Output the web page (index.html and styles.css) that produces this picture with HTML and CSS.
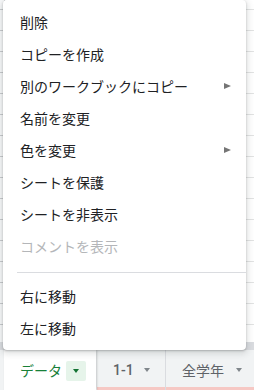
FILE: index.html
```html
<!DOCTYPE html>
<html lang="ja">
<head>
    <meta charset="UTF-8">
    <meta name="viewport" content="width=device-width, initial-scale=1.0">
    <title>Sheet menu</title>
    <link rel="stylesheet" href="styles.css">
</head>
<body>
    <div class="app">
        <div class="grid">
            <div class="rowhead"></div>
            <div class="cells"></div>
        </div>
        <div class="hbar"></div>
        <div class="tabs">
            <div class="tab active">
                <span>データ</span>
                <span class="drop"><i class="caret green"></i></span>
            </div>
            <div class="tab mid">
                <span class="num">1-1</span>
                <i class="caret"></i>
            </div>
            <div class="tab last">
                <span>全学年</span>
                <i class="caret"></i>
            </div>
        </div>
    </div>

    <div class="menu">
        <div class="item">削除</div>
        <div class="item">コピーを作成</div>
        <div class="item">別のワークブックにコピー<i class="arrow"></i></div>
        <div class="item">名前を変更</div>
        <div class="item">色を変更<i class="arrow"></i></div>
        <div class="item">シートを保護</div>
        <div class="item">シートを非表示</div>
        <div class="item disabled">コメントを表示</div>
        <div class="sep"></div>
        <div class="item">右に移動</div>
        <div class="item">左に移動</div>
    </div>
</body>
</html>
```

FILE: styles.css
```css
body {
    margin: 0;
    width: 254px;
    height: 390px;
    overflow: hidden;
    position: relative;
    font-family: Roboto, "Noto Sans CJK JP", sans-serif;
    color: #202124;
    background: #fff;
}
.app {
    display: flex;
    flex-direction: column;
    height: 390px;
}
.grid {
    display: flex;
    height: 342px;
}
.rowhead {
    width: 4px;
    background: repeating-linear-gradient(#f8f9fa 0 9px, #c8cacd 9px 10px, #f8f9fa 10px 21px);
    border-right: 1px solid #c8cacd;
}
.cells {
    flex: 1;
    background: repeating-linear-gradient(#fff 0 9px, #e2e3e3 9px 10px, #fff 10px 21px);
}
.hbar {
    height: 8px;
    background: #dadce0;
}
.tabs {
    display: flex;
    height: 40px;
    background: #f1f3f4;
    padding-left: 4px;
}
.tab {
    display: flex;
    align-items: center;
    flex-shrink: 0;
    box-sizing: border-box;
    padding-left: 16px;
    font-size: 14px;
    white-space: nowrap;
    color: #5f6368;
    box-shadow: inset 0 -3px 0 #f6c8c4;
    border-right: 1px solid #dadce0;
}
.tab.mid {
    width: 69px;
}
.tab.last {
    flex: 1;
    border-right: none;
}
.tab.active {
    width: 92px;
    background: #fff;
    color: #188038;
    box-shadow: 1px 0 2px rgba(60, 64, 67, 0.25);
    border-right: none;
    margin-right: 1px;
    z-index: 1;
}
.num {
    font-weight: 500;
}
.drop {
    display: flex;
    align-items: center;
    justify-content: center;
    width: 20px;
    height: 20px;
    margin-left: 4px;
    margin-top: 2px;
    border-radius: 2px;
    background: #e6f4ea;
}
.caret {
    width: 0;
    height: 0;
    border-left: 3px solid transparent;
    border-right: 3px solid transparent;
    border-top: 4px solid #80868b;
    margin-left: 10px;
}
.tab.last .caret {
    margin-left: 12px;
}
.caret.green {
    border-top-color: #137333;
    margin-left: 0;
}
.menu {
    position: absolute;
    left: 3px;
    top: 0;
    width: 243px;
    padding: 6px 0;
    background: #fff;
    border-radius: 4px;
    box-shadow: 0 2px 6px 2px rgba(60, 64, 67, 0.15), 0 1px 2px rgba(60, 64, 67, 0.3);
    z-index: 5;
}
.item {
    display: flex;
    align-items: center;
    height: 32px;
    padding: 0 15px 0 17px;
    font-size: 14px;
    color: #202124;
}
.item.disabled {
    color: #b4b6b9;
}
.arrow {
    margin-left: auto;
    width: 0;
    height: 0;
    border-left: 7px solid #757575;
    border-top: 3.5px solid transparent;
    border-bottom: 3.5px solid transparent;
}
.sep {
    height: 1px;
    margin: 10px 0 7px 14px;
    background: #dadce0;
}
```
